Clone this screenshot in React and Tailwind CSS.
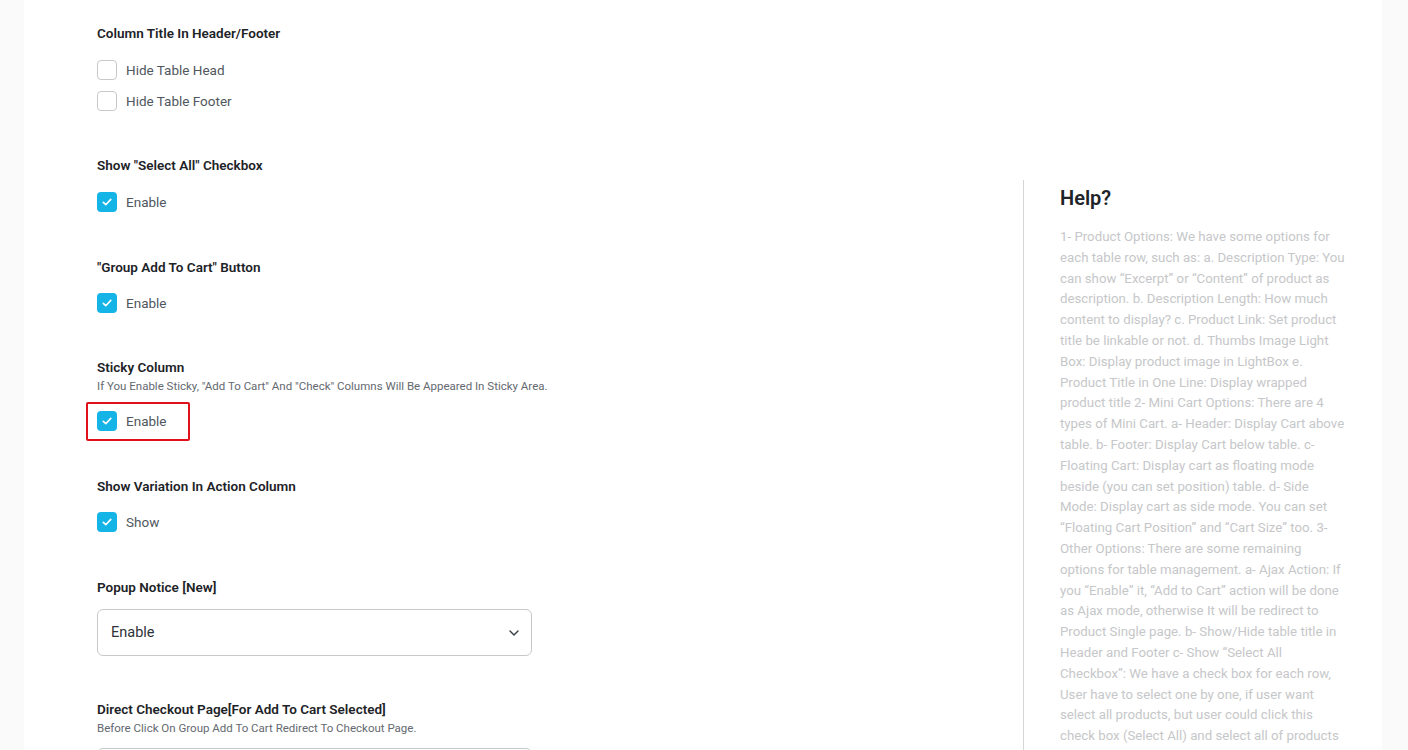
import React from "react";
import { ChevronDown } from "lucide-react";

const helpText =
  "1- Product Options: We have some options for each table row, such as: a. Description Type: You can show “Excerpt” or “Content” of product as description. b. Description Length: How much content to display? c. Product Link: Set product title be linkable or not. d. Thumbs Image Light Box: Display product image in LightBox e. Product Title in One Line: Display wrapped product title 2- Mini Cart Options: There are 4 types of Mini Cart. a- Header: Display Cart above table. b- Footer: Display Cart below table. c- Floating Cart: Display cart as floating mode beside (you can set position) table. d- Side Mode: Display cart as side mode. You can set “Floating Cart Position” and “Cart Size” too. 3- Other Options: There are some remaining options for table management. a- Ajax Action: If you “Enable” it, “Add to Cart” action will be done as Ajax mode, otherwise It will be redirect to Product Single page. b- Show/Hide table title in Header and Footer c- Show “Select All Checkbox”: We have a check box for each row, User have to select one by one, if user want select all products, but user could click this check box (Select All) and select all of products at once.";

// Checkbox row
const CheckRow = ({ label, checked }) => (
  <label className="flex items-center gap-[9px] h-5">
    <span
      className={
        checked
          ? "w-5 h-5 rounded-[4px] bg-[#14b4e6] flex items-center justify-center"
          : "w-5 h-5 rounded-[4px] border border-[#c8c9cc] bg-white"
      }
    >
      {checked && (
        <svg width="12" height="12" viewBox="0 0 12 12" fill="none">
          <path
            d="M2.3 6.3 L4.8 8.7 L9.8 3.4"
            stroke="white"
            strokeWidth="1.6"
            strokeLinecap="round"
            strokeLinejoin="round"
          />
        </svg>
      )}
    </span>
    <span className="text-[13.5px] leading-5 text-[#50575e]">{label}</span>
  </label>
);

const Heading = ({ children }) => (
  <h3 className="text-[13.5px] leading-[18px] font-semibold text-[#1d2327]">
    {children}
  </h3>
);

const Desc = ({ children }) => (
  <p className="text-[11.5px] leading-4 text-[#646970] mt-[2px]">{children}</p>
);

const Select = ({ value }) => (
  <div className="w-[435px] h-[47px] border border-[#c8c9cc] rounded-[6px] flex items-center justify-between pl-[13px] pr-[9px] bg-white">
    <span className="text-[14.5px] text-[#2c3338]">{value}</span>
    <ChevronDown className="w-4 h-4 text-[#3c434a]" strokeWidth={2.2} />
  </div>
);

export default function App() {
  return (
    <div
      className="min-h-screen bg-[#fafafa] pl-[24px] pr-[26px]"
      style={{ fontFamily: "Roboto, 'Noto Sans', sans-serif" }}
    >
      <div className="bg-white flex items-start min-h-screen">
        {/* settings column */}
        <div className="flex-1 pl-[73px] pt-[24px]">
          <section className="mb-[45px]">
            <Heading>Column Title In Header/Footer</Heading>
            <div className="mt-[18px] flex flex-col gap-[11px]">
              <CheckRow label="Hide Table Head" />
              <CheckRow label="Hide Table Footer" />
            </div>
          </section>

          <section className="mb-[46px]">
            <Heading>Show "Select All" Checkbox</Heading>
            <div className="mt-[18px]">
              <CheckRow label="Enable" checked />
            </div>
          </section>

          <section className="mb-[45px]">
            <Heading>"Group Add To Cart" Button</Heading>
            <div className="mt-[17px]">
              <CheckRow label="Enable" checked />
            </div>
          </section>

          <section className="mb-[46px]">
            <Heading>Sticky Column</Heading>
            <Desc>
              If You Enable Sticky, "Add To Cart" And "Check" Columns Will Be
              Appeared In Sticky Area.
            </Desc>
            <div className="mt-[17px] relative w-fit">
              <CheckRow label="Enable" checked />
              <span className="absolute left-[-11px] top-[-9px] w-[104px] h-[39px] border-2 border-[#e0111b] rounded-[2px] pointer-events-none" />
            </div>
          </section>

          <section className="mb-[46px]">
            <Heading>Show Variation In Action Column</Heading>
            <div className="mt-[17px]">
              <CheckRow label="Show" checked />
            </div>
          </section>

          <section className="mb-[44px]">
            <Heading>Popup Notice [New]</Heading>
            <div className="mt-[13px]">
              <Select value="Enable" />
            </div>
          </section>

          <section className="mb-[45px]">
            <Heading>Direct Checkout Page[For Add To Cart Selected]</Heading>
            <Desc>Before Click On Group Add To Cart Redirect To Checkout Page.</Desc>
            <div className="mt-[12px]">
              <Select value="Disable" />
            </div>
          </section>
        </div>

        {/* help column */}
        <aside className="w-[359px] mt-[180px] border-l border-[#d5d6d8] pl-[36px] pt-[6px] min-h-[600px]">
          <h2 className="text-[20px] leading-6 font-semibold text-[#1d2327]">
            Help?
          </h2>
          <p className="w-[287px] mt-[17px] text-[13.25px] leading-[20.8px] text-[#c6c7c9]">
            {helpText}
          </p>
        </aside>
      </div>
    </div>
  );
}
